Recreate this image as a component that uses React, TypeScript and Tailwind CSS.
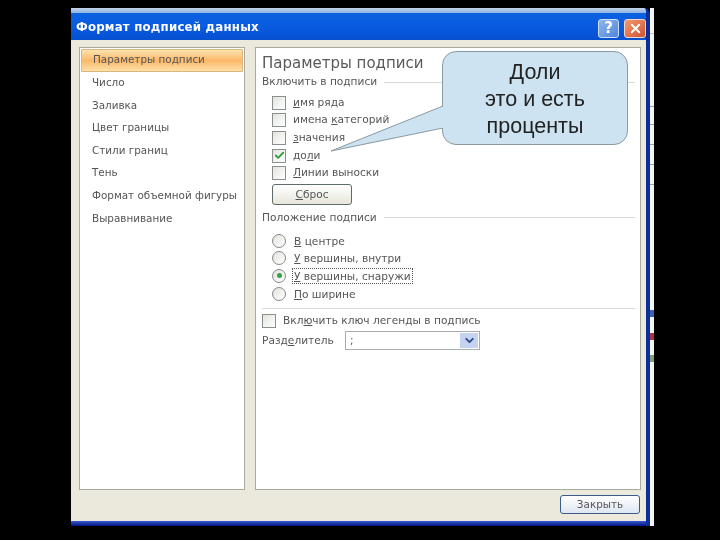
import * as React from 'react';
import { Check, ChevronDown, X } from 'lucide-react';

const navItems = ['Параметры подписи', 'Число', 'Заливка', 'Цвет границы', 'Стили границ', 'Тень', 'Формат объемной фигуры', 'Выравнивание'];

// bits of the sheet that show behind the dialog, top to bottom
const sliver = [
  { h: 25, c: '#f4f5f6' }, { h: 1, c: '#c4c8cc' }, { h: 72, c: '#f4f5f6' }, { h: 1, c: '#9aa0a6' },
  { h: 17, c: '#f4f5f6' }, { h: 1, c: '#9aa0a6' }, { h: 19, c: '#f4f5f6' }, { h: 1, c: '#9aa0a6' },
  { h: 19, c: '#f4f5f6' }, { h: 1, c: '#9aa0a6' }, { h: 19, c: '#f4f5f6' }, { h: 1, c: '#9aa0a6' },
  { h: 125, c: '#f4f5f6' }, { h: 7, c: '#3a62b0' }, { h: 16, c: '#f4f5f6' }, { h: 7, c: '#b03050' },
  { h: 15, c: '#f4f5f6' }, { h: 7, c: '#80a070' },
];

// text with one underlined mnemonic letter
const Mn: React.FC<{ pre?: string; u: string; post: string }> = ({ pre, u, post }) => (
  <span>{pre}<span className="underline">{u}</span>{post}</span>
);

const CheckRow: React.FC<{ checked?: boolean; children: React.ReactNode }> = ({ checked, children }) => (
  <div className="flex items-center h-[17.6px] pl-[10px]">
    <div className="w-[14px] h-[14px] border border-[#8a8f8f] bg-gradient-to-br from-[#e4e4de] to-white flex items-center justify-center shrink-0">
      {checked && <Check className="w-[11px] h-[11px] text-[#2f9e44]" strokeWidth={4} />}
    </div>
    <div className="ml-[7px]">{children}</div>
  </div>
);

const RadioRow: React.FC<{ checked?: boolean; focus?: boolean; children: React.ReactNode }> = ({ checked, focus, children }) => (
  <div className="flex items-center h-[17.6px] pl-[10px]">
    <div className="w-[14px] h-[14px] rounded-full border border-[#858a8a] bg-gradient-to-br from-[#e2e2dc] to-white flex items-center justify-center shrink-0">
      {checked && <div className="w-[5px] h-[5px] rounded-full bg-[#35a04a]" />}
    </div>
    <div className={`ml-[6px] px-[1px] leading-[14px] border border-dotted ${focus ? 'border-[#555]' : 'border-transparent'}`}>{children}</div>
  </div>
);

const GroupLabel: React.FC<{ text: string }> = ({ text }) => (
  <div className="flex items-center h-[16px]">
    <span>{text}</span>
    <div className="flex-1 h-px bg-[#d9d9d6] ml-[7px]" />
  </div>
);

export default function App() {
  return (
    <div className="relative w-[720px] h-[540px] bg-black overflow-hidden pt-[8px] pl-[71px] text-[10.4px] text-[#555] blur-[0.5px]" style={{ fontFamily: '"DejaVu Sans", sans-serif' }}>
      <div className="flex w-[583px] h-[518px]">
        {/* Dialog window */}
        <div className="w-[579px] h-full flex flex-col bg-[#ebe9dc] border-r-[4px] border-[#0a2f9c] rounded-tr-[6px] overflow-hidden">
          <div className="h-[5px] bg-gradient-to-b from-[#c4d4e8] to-[#8fb4e2]" />
          {/* Title bar */}
          <div className="h-[27px] bg-gradient-to-b from-[#0b62e0] via-[#0a5ae0] to-[#0650d0] flex items-center pl-[5px] pt-[3px]">
            <span className="flex-1 text-white font-bold text-[11.8px] tracking-[0.2px]">Формат подписей данных</span>
            <div className="w-[21px] h-[19px] rounded-[3px] border border-[#cfe0f5] bg-gradient-to-br from-[#8fb6ee] to-[#4f86dc] flex items-center justify-center text-white font-bold text-[15px] leading-none mr-[5px]">?</div>
            <div className="w-[22px] h-[19px] rounded-[3px] border border-[#f0d8cc] bg-gradient-to-br from-[#ef9a73] to-[#d2522f] flex items-center justify-center">
              <X className="w-[15px] h-[15px] text-white" strokeWidth={3} />
            </div>
          </div>

          {/* Body */}
          <div className="flex-1 flex px-[8px] pt-[7px] gap-[10px]">
            {/* Left nav */}
            <div className="w-[166px] h-[443px] shrink-0 bg-white border border-[#a9a99f] p-[1px]">
              {navItems.map((item, i) => (
                <div
                  key={item}
                  className={`h-[22.6px] flex items-center pl-[11px] ${i === 0 ? 'bg-gradient-to-b from-[#fde3b0] via-[#fbb868] to-[#fde0a8] border border-[#d9b77a] rounded-[1px]' : ''}`}
                >
                  {item}
                </div>
              ))}
            </div>

            {/* Right panel */}
            <div className="w-[386px] h-[443px] shrink-0 bg-white border border-[#a9a99f] pl-[6px] pr-[5px] pt-[5px] text-[10.6px]">
              <div className="text-[15px] leading-[20px] text-[#5a5a5a]">Параметры подписи</div>
              <div className="mt-[1px]"><GroupLabel text="Включить в подписи" /></div>
              <div className="mt-[4px]">
                <CheckRow><Mn u="и" post="мя ряда" /></CheckRow>
                <CheckRow><Mn pre="имена " u="к" post="атегорий" /></CheckRow>
                <CheckRow><Mn u="з" post="начения" /></CheckRow>
                <CheckRow checked><Mn pre="до" u="л" post="и" /></CheckRow>
                <CheckRow><Mn u="Л" post="инии выноски" /></CheckRow>
              </div>
              <div className="mt-[2px] ml-[10px] w-[80px] h-[21px] rounded-[3px] border border-[#5f6b6b] bg-gradient-to-b from-white to-[#e6e6dc] flex items-center justify-center">
                <Mn u="С" post="брос" />
              </div>
              <div className="mt-[5px]"><GroupLabel text="Положение подписи" /></div>
              <div className="mt-[6px]">
                <RadioRow><Mn u="В" post=" центре" /></RadioRow>
                <RadioRow><Mn u="У" post=" вершины, внутри" /></RadioRow>
                <RadioRow checked focus><Mn u="У" post=" вершины, снаружи" /></RadioRow>
                <RadioRow><Mn u="П" post="о ширине" /></RadioRow>
              </div>
              <div className="mt-[6px] h-px bg-[#d9d9d6]" />
              <div className="mt-[3px] flex items-center h-[17px]">
                <div className="w-[14px] h-[14px] border border-[#8a8f8f] bg-gradient-to-br from-[#e4e4de] to-white" />
                <div className="ml-[7px]"><Mn pre="Вкл" u="ю" post="чить ключ легенды в подпись" /></div>
              </div>
              <div className="mt-[2px] flex items-center h-[19px]">
                <span className="w-[83px]"><Mn pre="Разд" u="е" post="литель" /></span>
                <div className="w-[135px] h-[19px] border border-[#a5acb2] flex items-center justify-between pl-[4px]">
                  <span>;</span>
                  <div className="w-[18px] h-[15px] mr-px bg-[#c3d3f0] flex items-center justify-center">
                    <ChevronDown className="w-[13px] h-[13px] text-[#2a4a8a]" strokeWidth={3.5} />
                  </div>
                </div>
              </div>
            </div>
          </div>

          {/* Footer */}
          <div className="h-[31px] flex justify-end items-start pt-[5px] pr-[6px]">
            <div className="w-[80px] h-[19px] rounded-[3px] border border-[#3c5a8c] bg-gradient-to-b from-white to-[#dfe6f2] flex items-center justify-center">Закрыть</div>
          </div>
          <div className="h-[5px] bg-gradient-to-b from-[#3a5ad0] to-[#050f80]" />
        </div>

        {/* Sliver of the sheet behind the dialog */}
        <div className="w-[4px] h-full bg-[#f4f5f6] flex flex-col">
          {sliver.map((s, i) => (
            <div key={i} style={{ height: s.h, backgroundColor: s.c }} />
          ))}
        </div>
      </div>

      {/* Callout over the dialog */}
      <svg className="absolute left-[325px] top-[100px]" width="125" height="55" viewBox="0 0 125 55">
        <path d="M6 51 L118 6 L118 28 Z" fill="#cde3f1" stroke="#8a9aa0" strokeWidth="1" />
      </svg>
      <div className="absolute left-[442px] top-[51px] w-[186px] h-[94px] pt-[3px] rounded-[14px] bg-[#cde3f1] border border-[#8a9aa0] flex items-center justify-center text-center text-[#222] text-[21.5px] leading-[27px]" style={{ fontFamily: '"Liberation Sans", sans-serif' }}>
        <div>Доли<br />это и есть<br />проценты</div>
      </div>
      {/* Hides the tail's join with the callout */}
      <div className="absolute left-[441px] top-[107px] w-[3px] h-[21px] bg-[#cde3f1]" />
    </div>
  );
}
